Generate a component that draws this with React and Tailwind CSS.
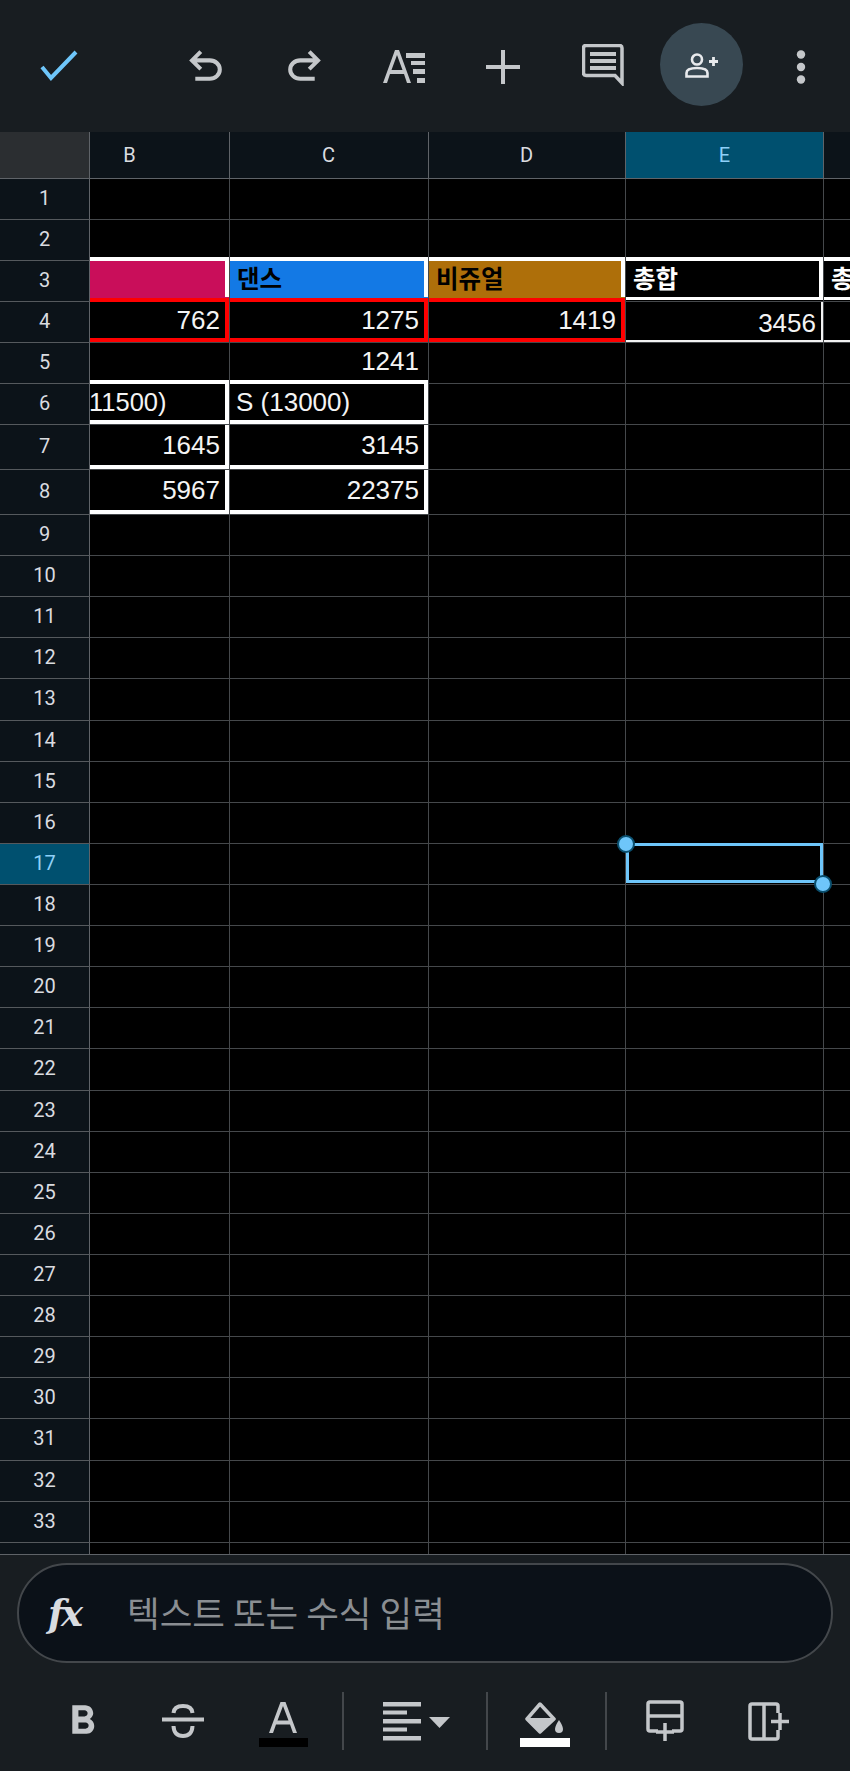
import React from "react";

const sans = "[font-family:'Liberation_Sans','Noto_Sans_CJK_KR',sans-serif]";
const ICON = "#c4c7ca";

function Check() {
  return (
    <svg width="40" height="32" viewBox="0 0 40 32" fill="none">
      <path d="M3 17 L12 28 L37 2" stroke="#6ec6fa" strokeWidth="4" />
    </svg>
  );
}
function Undo({ flip }) {
  return (
    <svg width="49" height="49" viewBox="0 0 24 24" fill={ICON} className={flip ? "-scale-x-100" : ""}>
      <path d="M7 19v-2h7.1q1.575 0 2.738-1T18 13.5q0-1.5-1.162-2.5T14.1 10H7.8l2.6 2.6L9 14 4 9l5-5 1.4 1.4L7.8 8h6.3q2.425 0 4.163 1.575T20 13.5q0 2.35-1.737 3.925T14.1 19H7z" />
    </svg>
  );
}
function TextFormat() {
  return (
    <svg width="44" height="36" viewBox="0 0 44 36" fill={ICON}>
      <path d="M1 34 L13 1 L17 1 L29 34 L25 34 L22 25 L8 25 L5 34 Z M9.5 21 L20.5 21 L15 6 Z" fillRule="evenodd" />
      <rect x="24" y="4" width="19" height="5" />
      <rect x="29" y="12" width="14" height="4" />
      <rect x="31" y="20" width="12" height="5" />
      <rect x="35" y="29" width="8" height="5" />
    </svg>
  );
}
function Plus() {
  return (
    <svg width="34" height="34" viewBox="0 0 34 34" fill={ICON}>
      <rect x="15" y="0" width="4" height="34" />
      <rect x="0" y="15" width="34" height="4" />
    </svg>
  );
}
function Comment() {
  return (
    <svg width="42" height="42" viewBox="0 0 42 42" fill="none">
      <path d="M40 39 L33 31.5 L4 31.5 Q1.5 31.5 1.5 29 L1.5 4 Q1.5 1.5 4 1.5 L37.5 1.5 Q40 1.5 40 4 Z" stroke={ICON} strokeWidth="3.5" />
      <rect x="8" y="8" width="26" height="4" fill={ICON} />
      <rect x="8" y="15" width="26" height="4" fill={ICON} />
      <rect x="8" y="22" width="26" height="4" fill={ICON} />
    </svg>
  );
}
function PersonAdd() {
  return (
    <svg width="34" height="26" viewBox="0 0 34 26" fill="none" stroke="#e8eaed">
      <circle cx="12" cy="7.5" r="5" strokeWidth="2.6" />
      <path d="M1.5 24.5 L1.5 21 Q1.5 16 12 16 Q22.5 16 22.5 21 L22.5 24.5 Z" strokeWidth="2.6" />
      <path d="M28.5 5 L28.5 14 M24 9.5 L33 9.5" strokeWidth="2.8" />
    </svg>
  );
}
function Dots() {
  return (
    <svg width="10" height="34" viewBox="0 0 10 34" fill={ICON}>
      <circle cx="5" cy="4.5" r="4.2" />
      <circle cx="5" cy="17" r="4.2" />
      <circle cx="5" cy="29.5" r="4.2" />
    </svg>
  );
}
function Bold() {
  return (
    <svg width="49" height="49" viewBox="0 0 24 24" fill={ICON}>
      <path d="M15.6 10.79c.97-.67 1.65-1.77 1.65-2.79 0-2.26-1.75-4-4-4H7v14h7.04c2.09 0 3.71-1.7 3.71-3.79 0-1.52-.86-2.82-2.15-3.42zM10 6.5h3c.83 0 1.5.67 1.5 1.5s-.67 1.5-1.5 1.5h-3v-3zm3.5 9H10v-3h3.5c.83 0 1.5.67 1.5 1.5s-.67 1.5-1.5 1.5z" />
    </svg>
  );
}
function Strike() {
  return (
    <svg width="42" height="34" viewBox="0 0 42 34" fill="none" stroke={ICON}>
      <path d="M0 15.5 L42 15.5" strokeWidth="4" />
      <path d="M11.5 9 Q12 2 21 2 Q30 2 30.5 9" strokeWidth="4" />
      <path d="M11.5 22 Q12 32 21 32 Q30 32 30.5 22" strokeWidth="4" />
    </svg>
  );
}
function ColorA() {
  return (
    <div className="flex flex-col items-center">
      <svg width="28" height="31" viewBox="0 0 28 31" fill={ICON}>
        <path d="M0 31 L11.5 0 L16.5 0 L28 31 L24 31 L21 22.5 L7 22.5 L4 31 Z M8.5 18.5 L19.5 18.5 L14 4 Z" fillRule="evenodd" />
      </svg>
      <div className="mt-[5px] w-[49px] h-[9px] bg-black" />
    </div>
  );
}
function Align() {
  return (
    <svg width="68" height="40" viewBox="0 0 68 40" fill={ICON}>
      <rect x="0" y="1" width="38" height="4.5" />
      <rect x="0" y="9.5" width="24" height="4" />
      <rect x="0" y="18" width="38" height="4.5" />
      <rect x="0" y="26.5" width="24" height="4" />
      <rect x="0" y="35" width="38" height="4.5" />
      <path d="M46 16 L67 16 L56.5 27 Z" />
    </svg>
  );
}
function Fill() {
  return (
    <div className="flex flex-col items-center">
      <svg width="40" height="33" viewBox="0 0 40 33" fill="none">
        <path d="M15 3 L29 18 L15 31 L2 18 Z" stroke={ICON} strokeWidth="3.5" strokeLinejoin="round" />
        <path d="M2 17 L29 17 L15 31 Z" fill={ICON} />
        <path d="M34 19 Q38 25 38 28 A4 4 0 0 1 30 28 Q30 25 34 19 Z" fill={ICON} />
      </svg>
      <div className="mt-[4px] w-[50px] h-[9px] bg-white" />
    </div>
  );
}
function InsertRow() {
  return (
    <svg width="38" height="41" viewBox="0 0 38 41" fill="none" stroke={ICON} strokeWidth="3.5">
      <path d="M12 31 L4 31 Q2 31 2 29 L2 4 Q2 2 4 2 L34 2 Q36 2 36 4 L36 29 Q36 31 34 31 L26 31" />
      <path d="M2 16 L36 16" />
      <path d="M19 23 L19 41 M10 32 L28 32" />
    </svg>
  );
}
function InsertCol() {
  return (
    <svg width="41" height="39" viewBox="0 0 41 39" fill="none" stroke={ICON} strokeWidth="3.5">
      <path d="M30 11 L30 4 Q30 2 28 2 L4 2 Q2 2 2 4 L2 35 Q2 37 4 37 L28 37 Q30 37 30 35 L30 28" />
      <path d="M16 2 L16 37" />
      <path d="M23 19.5 L41 19.5 M32 11 L32 28" />
    </svg>
  );
}

const colClass = {
  B: "w-[140px]",
  C: "w-[199px]",
  D: "w-[197px]",
  E: "w-[198px]",
  F: "w-[26px]",
};
const cols = ["B", "C", "D", "E", "F"];

const cellData = {
  "B3": { fill: "bg-[#c90e5a]", box: "-top-[4px] bottom-[4px] left-0 right-0 border-t-4 border-r-4 border-white" },
  "C3": { fill: "bg-[#1379e5]", box: "-top-[4px] bottom-[4px] left-0 right-0 border-t-4 border-r-4 border-white", text: "댄스", kind: "bl", tone: "text-black" },
  "D3": { fill: "bg-[#ae6f0a]", box: "-top-[4px] bottom-[4px] left-0 right-0 border-t-4 border-r-4 border-white", text: "비쥬얼", kind: "bl", tone: "text-black" },
  "E3": { box: "-top-[4px] bottom-[1px] left-0 right-0 border-t-4 border-r-4 border-b-[3px] border-white", text: "총합", kind: "bl", tone: "text-white" },
  "F3": { box: "-top-[4px] bottom-[1px] left-0 right-0 border-t-4 border-b-[3px] border-white", text: "총", kind: "bl", tone: "text-white" },
  "B4": { box: "-top-[4px] bottom-0 left-0 right-0 border-t-4 border-r-4 border-b-4 border-[#ff0000]", text: "762", kind: "num" },
  "C4": { box: "-top-[4px] bottom-0 left-0 right-0 border-t-4 border-r-4 border-b-4 border-[#ff0000]", text: "1275", kind: "num" },
  "D4": { box: "-top-[4px] bottom-0 left-0 right-0 border-t-4 border-r-4 border-b-4 border-[#ff0000]", text: "1419", kind: "num" },
  "E4": { box: "top-0 bottom-0 left-0 right-0 border-r-2 border-b-2 border-[#f2f2f2]", text: "3456", kind: "numlow" },
  "F4": { box: "top-0 bottom-0 left-0 right-0 border-b-2 border-[#f2f2f2]" },
  "C5": { text: "1241", kind: "num" },
  "B6": { box: "-top-[4px] bottom-0 left-0 right-0 border-t-4 border-r-4 border-b-4 border-white", text: "11500)", kind: "clip" },
  "C6": { box: "-top-[4px] bottom-0 left-0 right-0 border-t-4 border-r-4 border-b-4 border-white", text: "S (13000)", kind: "left" },
  "B7": { box: "top-0 bottom-0 left-0 right-0 border-r-4 border-b-4 border-white", text: "1645", kind: "num" },
  "C7": { box: "top-0 bottom-0 left-0 right-0 border-r-4 border-b-4 border-white", text: "3145", kind: "num" },
  "B8": { box: "top-0 bottom-0 left-0 right-0 border-r-4 border-b-4 border-white", text: "5967", kind: "num" },
  "C8": { box: "top-0 bottom-0 left-0 right-0 border-r-4 border-b-4 border-white", text: "22375", kind: "num" },
};

function CellText({ d }) {
  if (!d.text) return null;
  const base = `relative z-10 whitespace-nowrap self-center ${sans}`;
  if (d.kind === "bl")
    return <span className={`${base} pl-[7px] pb-[2px] text-[24.5px] font-bold ${d.tone}`}>{d.text}</span>;
  if (d.kind === "left")
    return <span className={`${base} pl-[6px] pb-[3px] text-[26px] text-[#f4f4f4]`}>{d.text}</span>;
  if (d.kind === "clip")
    return <span className={`${base} -ml-[1px] pb-[3px] text-[25.5px] text-[#f4f4f4]`}>{d.text}</span>;
  if (d.kind === "numlow")
    return <span className={`${base} ml-auto pr-[7px] pt-[2px] text-[26px] text-[#f4f4f4]`}>{d.text}</span>;
  return <span className={`${base} ml-auto pr-[9px] pb-[3px] text-[26px] text-[#f4f4f4]`}>{d.text}</span>;
}

function Row({ n, h }) {
  const selected = n === 17;
  return (
    <div className={`flex shrink-0 ${h}`}>
      <div
        className={`w-[90px] shrink-0 flex items-center justify-center pb-[2px] border-r border-r-[#5f6368] border-b border-b-[#55595d] text-[20px] [font-family:Roboto,sans-serif] ${
          selected ? "bg-[#00506f] text-[#8fd0f8]" : "bg-[#0c1319] text-[#dadce0]"
        }`}
      >
        {n <= 33 ? n : ""}
      </div>
      {cols.map((c) => {
        const d = cellData[c + n] || {};
        const last = c === "F";
        return (
          <div
            key={c}
            className={`relative flex shrink-0 overflow-visible ${colClass[c]} ${last ? "" : "border-r"} border-b border-[#45484b] ${d.fill || "bg-black"}`}
          >
            {d.box ? <div className={`absolute ${d.box}`} /> : null}
            <div className="flex w-full overflow-hidden">
              <CellText d={d} />
            </div>
            {selected && c === "E" ? (
              <>
                <div className="absolute -top-[1px] bottom-[1px] left-0 right-0 border-[3px] border-[#6ec6fa] z-20" />
                <div className="absolute -top-[9px] -left-[9px] w-[18px] h-[18px] rounded-full bg-[#6ec6fa] border-2 border-[#0a4f6e] z-30" />
                <div className="absolute -bottom-[9px] -right-[9px] w-[18px] h-[18px] rounded-full bg-[#6ec6fa] border-2 border-[#0a4f6e] z-30" />
              </>
            ) : null}
          </div>
        );
      })}
    </div>
  );
}

const heights = { 7: "h-[45px]", 8: "h-[45px]" };
const rows = Array.from({ length: 33 }, (_, i) => i + 1);

export default function App() {
  return (
    <div className="w-[850px] h-[1771px] flex flex-col bg-[#181d21] overflow-hidden">
      {/* top bar */}
      <div className="h-[132px] shrink-0 flex items-center">
        <div className="ml-[10px] w-[98px] flex justify-center"><Check /></div>
        <div className="ml-[48px] w-[99px] flex justify-center"><Undo /></div>
        <div className="w-[99px] flex justify-center"><Undo flip /></div>
        <div className="w-[99px] flex justify-center pt-[1px]"><TextFormat /></div>
        <div className="w-[99px] flex justify-center pt-[1px]"><Plus /></div>
        <div className="w-[99px] flex justify-center pb-[2px] pl-[2px]"><Comment /></div>
        <div className="w-[99px] flex justify-center pb-[3px] pl-[1px]">
          <div className="w-[83px] h-[83px] rounded-full bg-[#384852] flex items-center justify-center pl-[1px]"><PersonAdd /></div>
        </div>
        <div className="w-[99px] flex justify-center pl-[2px] pt-[1px]"><Dots /></div>
      </div>

      {/* sheet */}
      <div className="h-[1423px] shrink-0 flex flex-col overflow-hidden border-b border-[#5f6368] bg-black">
        <div className="flex h-[47px] shrink-0 text-[20px] [font-family:Roboto,sans-serif] text-[#dadce0]">
          <div className="w-[90px] shrink-0 bg-[#2b2e31] border-r border-b border-[#5f6368]" />
          <div className="w-[140px] shrink-0 bg-[#0c1319] border-r border-b border-[#5f6368] flex items-center justify-center pr-[60px]">B</div>
          <div className="w-[199px] shrink-0 bg-[#0c1319] border-r border-b border-[#5f6368] flex items-center justify-center pr-[1px]">C</div>
          <div className="w-[197px] shrink-0 bg-[#0c1319] border-r border-b border-[#5f6368] flex items-center justify-center pr-[1px]">D</div>
          <div className="w-[198px] shrink-0 bg-[#00506f] border-r border-b border-[#5f6368] flex items-center justify-center text-[#8fd0f8]">E</div>
          <div className="w-[26px] shrink-0 bg-[#0c1319] border-b border-[#5f6368]" />
        </div>
        {rows.map((n) => (
          <Row key={n} n={n} h={heights[n] || (n >= 9 ? "h-[41.12px]" : "h-[41px]")} />
        ))}
        <Row n={34} h="h-[41px]" />
      </div>

      {/* formula bar */}
      <div className="mt-[8px] mx-[17px] h-[100px] shrink-0 rounded-full border-2 border-[#43474b] bg-[#0b1118] flex items-center">
        <span className="ml-[29px] w-[46px] [font-family:'DejaVu_Serif',serif] italic font-bold text-[37px] leading-none text-[#d9dce0] -tracking-[3px]">fx</span>
        <span className="ml-[33px] pb-[2px] text-[35.5px] text-[#8a8e92] [font-family:'Noto_Sans_CJK_KR',sans-serif]">텍스트 또는 수식 입력</span>
      </div>

      {/* bottom toolbar */}
      <div className="flex items-center mt-[29px] h-[58px] shrink-0 pl-[33px]">
        <div className="w-[100px] flex justify-center pr-[2px]"><Bold /></div>
        <div className="w-[100px] flex justify-center"><Strike /></div>
        <div className="w-[100px] flex justify-center pt-[6px]"><ColorA /></div>
        <div className="ml-[9px] w-[2px] h-[58px] bg-[#43474b]" />
        <div className="w-[142px] flex justify-center pl-[4px]"><Align /></div>
        <div className="w-[2px] h-[58px] bg-[#43474b]" />
        <div className="w-[117px] flex justify-center pt-[6px] pr-[3px]"><Fill /></div>
        <div className="w-[2px] h-[58px] bg-[#43474b]" />
        <div className="w-[117px] flex justify-center pb-[1px] pr-[1px]"><InsertRow /></div>
        <div className="w-[88px] flex justify-center"><InsertCol /></div>
      </div>
    </div>
  );
}
